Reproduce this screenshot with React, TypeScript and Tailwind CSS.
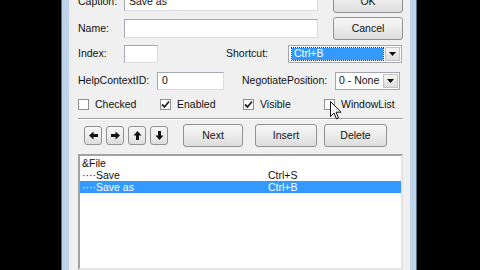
import React from "react";

// Small pieces of the classic dialog

const Button = ({ children, className = "" }: { children?: React.ReactNode; className?: string }) => (
  <div
    className={`flex shrink-0 items-center justify-center rounded-[3px] border border-[#8f9296] bg-linear-to-b from-[#f7f7f7] via-[#ececec] to-[#dcdcdc] text-[#111] ${className}`}
  >
    {children}
  </div>
);

const TextBox = ({ value = "", className = "" }: { value?: string; className?: string }) => (
  <div
    className={`flex shrink-0 items-center border border-[#a3a8b0] border-r-[#d9dde2] border-b-[#d9dde2] bg-white pl-[4px] ${className}`}
  >
    {value}
  </div>
);

const DropArrow = () => (
  <div className="flex h-full w-[15px] shrink-0 items-center justify-center border border-[#c4c4c4] bg-linear-to-b from-[#f4f4f4] to-[#dedede]">
    <svg width="7" height="4" viewBox="0 0 7 4">
      <path d="M0 0 H7 L3.5 4 Z" fill="#111" />
    </svg>
  </div>
);

const CheckBox = ({ label, checked, children }: { label: string; checked?: boolean; children?: React.ReactNode }) => (
  <div className="relative flex items-center">
    <div className="flex h-[11px] w-[11px] shrink-0 items-center justify-center border border-[#8e8f8f] bg-white">
      {checked && (
        <svg width="9" height="9" viewBox="0 0 9 9">
          <path d="M1 4.5 L3.5 7 L8 1.5" fill="none" stroke="#222" strokeWidth="1.8" />
        </svg>
      )}
    </div>
    <span className="ml-[6px] leading-none">{label}</span>
    {children}
  </div>
);

// arrow glyphs for the move buttons
const Arrow = ({ dir }: { dir: "left" | "right" | "up" | "down" }) => {
  const rot = { left: 0, right: 180, up: 90, down: 270 }[dir];
  return (
    <svg width="9" height="9" viewBox="0 0 9 9" style={{ transform: `rotate(${rot}deg)` }}>
      <path d="M0 4.5 L4.5 0.5 V3 H9 V6 H4.5 V8.5 Z" fill="#111" />
    </svg>
  );
};

const items = [
  { text: "&File", key: "", selected: false },
  { text: "····Save", key: "Ctrl+S", selected: false },
  { text: "····Save as", key: "Ctrl+B", selected: true },
];

export default function App() {
  return (
    <div className="flex h-[270px] w-[480px] overflow-hidden bg-black font-['Liberation_Sans',Arial,sans-serif] text-[10.5px] text-[#111]">
      <div className="w-[61px] shrink-0" />
      {/* window frame */}
      <div className="flex w-[356px] shrink-0 border-x border-[#5f6f82] bg-[#bfd3ea] pl-[7px] pr-[6px]">
        <div className="flex w-[341px] flex-col bg-[#f0f0f0] pl-[9px] pr-[7px]">
          {/* caption / name + ok / cancel */}
          <div className="mt-[-10px] grid grid-cols-[1fr_70px] gap-y-[4px]">
            <div className="flex h-[23px] items-center">
              <span className="w-[46px]">Caption:</span>
              <TextBox value="Save as" className="h-[19px] w-[194px]" />
            </div>
            <Button className="h-[23px]">OK</Button>
            <div className="flex h-[23px] items-center">
              <span className="w-[46px]">Name:</span>
              <TextBox className="h-[19px] w-[194px]" />
            </div>
            <Button className="h-[23px]">Cancel</Button>
          </div>

          {/* index / shortcut */}
          <div className="mt-[5px] flex h-[18px] items-center">
            <span className="w-[46px]">Index:</span>
            <TextBox className="h-[18px] w-[34px]" />
            <span className="ml-[68px] w-[62px]">Shortcut:</span>
            <div className="flex h-[18px] w-[114px] items-center border border-[#a3a8b0] bg-white p-[1px]">
              <div className="mx-[2px] flex h-[12px] flex-1 items-center bg-[#3399ff] pl-[2px] text-white outline-1 outline-dotted outline-[#333]">
                Ctrl+B
              </div>
              <DropArrow />
            </div>
          </div>

          {/* help context / negotiate */}
          <div className="mt-[9px] flex h-[18px] items-center">
            <span className="w-[79px]">HelpContextID:</span>
            <TextBox value="0" className="h-[18px] w-[67px]" />
            <span className="ml-[18px] w-[93px]">NegotiatePosition:</span>
            <div className="flex h-[18px] w-[65px] items-center border border-[#a3a8b0] bg-white p-[1px]">
              <span className="flex-1 pl-[2px]">0 - None</span>
              <DropArrow />
            </div>
          </div>

          {/* check boxes */}
          <div className="mt-[8px] grid h-[12px] grid-cols-[82px_83px_81px_1fr] items-center">
            <CheckBox label="Checked" />
            <CheckBox label="Enabled" checked />
            <CheckBox label="Visible" checked />
            <CheckBox label="WindowList">
              {/* mouse pointer */}
              <svg className="absolute left-[6px] top-[2px]" width="12" height="19" viewBox="0 0 12 19">
                <path
                  d="M0.5 0.5 V15.5 L4 12 L6.5 18 L8.5 17 L6 11.2 H11 Z"
                  fill="#fff"
                  stroke="#111"
                  strokeWidth="1"
                  strokeLinejoin="round"
                />
              </svg>
            </CheckBox>
          </div>

          {/* separator */}
          <div className="mt-[8px] h-px bg-[#a0a0a0]" />
          <div className="h-px bg-white" />

          {/* buttons */}
          <div className="mt-[4px] flex h-[23px] items-center">
            <div className="ml-[6px] flex gap-[4px]">
              <Button className="h-[19px] w-[18px]">
                <Arrow dir="left" />
              </Button>
              <Button className="h-[19px] w-[18px]">
                <Arrow dir="right" />
              </Button>
              <Button className="h-[19px] w-[18px]">
                <Arrow dir="up" />
              </Button>
              <Button className="h-[19px] w-[18px]">
                <Arrow dir="down" />
              </Button>
            </div>
            <Button className="ml-[15px] h-[23px] w-[60px]">Next</Button>
            <Button className="ml-[12px] h-[23px] w-[62px]">Insert</Button>
            <Button className="ml-[7px] h-[23px] w-[63px]">Delete</Button>
          </div>

          {/* menu list */}
          <div className="mt-[7px] flex-1 border-2 border-[#a2a2a2] border-r-[#e4e4e4] border-b-[#e4e4e4] bg-white pt-[1px]">
            {items.map((it) => (
              <div
                key={it.text}
                className={`flex h-[12px] items-center pl-[2px] leading-[12px] ${it.selected ? "bg-[#3399ff] text-white" : ""}`}
              >
                <span className="w-[186px]">{it.text}</span>
                <span>{it.key}</span>
              </div>
            ))}
          </div>
        </div>
      </div>
    </div>
  );
}
